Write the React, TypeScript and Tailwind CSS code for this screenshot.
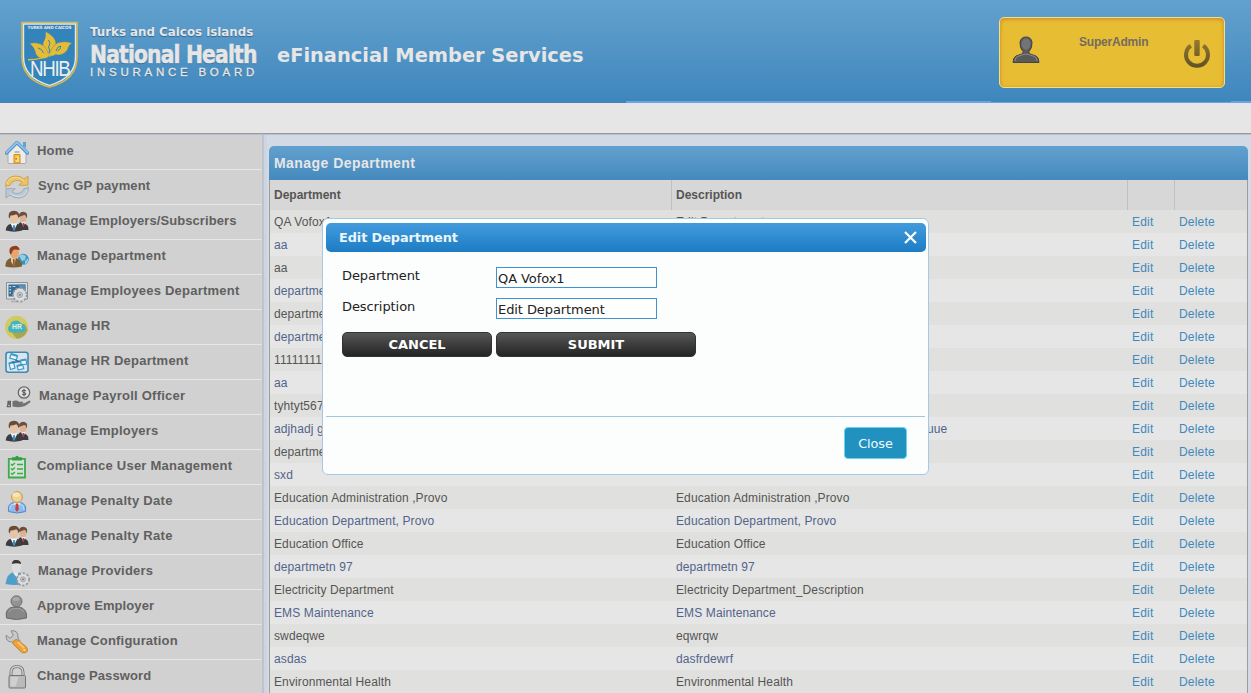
import React from "react";

const People = () => (
  <svg width="24" height="24" viewBox="0 0 24 24">
    <path d="M13 20q-1-8 4-8l5 3q2 2 1.500 5z" fill="#3b3c40" />
    <path d="M16 12h4l-1.500 5z" fill="#f2f2f2" />
    <path d="M17.600 13h1.200l.4 3-1 1.500-1-1.500z" fill="#b8323c" />
    <ellipse cx="18" cy="8" rx="3.400" ry="4.300" fill="#deb291" />
    <path d="M14 7q-.5-5 4-5.200 5 .2 4 5.700l-.7.8q0-3-2-3.200-3 1-5.300 1.900z" fill="#6b4f40" />
    <path d="M.7 20.500Q1 15 5.500 14h7q4.500 1.500 4.800 6.500-8 2.300-16.600 0z" fill="#3b3d42" />
    <path d="M5.500 13.500h7L9 20.500z" fill="#f4f4f4" />
    <path d="M8.300 15h1.500l.6 4-1.300 2.200L7.800 19z" fill="#3d8fc4" />
    <ellipse cx="8.800" cy="8" rx="4.300" ry="5.200" fill="#e6c3a4" />
    <path d="M3.700 7Q3 .9 9 .8q6 .3 5 6.200l-.8 1.300q0-3.300-2-4-3.300 1.500-5.700 1.300L4.700 8.500z" fill="#6a4a38" />
  </svg>
);

const Gear = ({ x, y, r }: { x: number; y: number; r: number }) => (
  <g transform={`translate(${x} ${y})`}>
    <circle r={r} fill="#d9dadc" stroke="#96999d" strokeWidth="2" strokeDasharray="2.200 1.700" />
    <circle r={r - 0.8} fill="#dcdddf" />
    <circle r={r * 0.42} fill="#c0c4c8" stroke="#999" strokeWidth=".7" />
    <circle r=".9" fill="#777" />
  </g>
);

const Home = () => (
  <svg width="24" height="24" viewBox="0 0 24 24">
    <path d="M3 12 12 4l9 8v10.500q0 1-1 1H4q-1 0-1-1z" fill="#ececea" stroke="#a9a9a9" />
    <path d="M18 2h3v6l-3-2z" fill="#62a3d6" />
    <path d="M1.500 13 12 2.500 22.500 13" fill="none" stroke="#4b8fc4" strokeWidth="3.400" strokeLinecap="round" strokeLinejoin="round" />
    <path d="M1.500 12.700 12 2.300 22.500 12.700" fill="none" stroke="#8fc4ec" strokeWidth="1.800" strokeLinecap="round" />
    <path d="M9.500 11h5v2h-5z" fill="#b7bbbd" />
    <path d="M9 14.500h6V23H9z" fill="#f2c23c" stroke="#d98a22" />
    <path d="M11 16.500h3V22h-3z" fill="#f7dc70" />
    <path d="M10.500 18h1.500v1.500h-1.500z" fill="#b8732a" />
  </svg>
);

const Sync = () => (
  <svg width="24" height="24" viewBox="0 0 24 24">
    <path d="M.6 12Q.3 2 10 1q5.500-.4 9 3L23 1.200v9h-9l3-3Q14 4.800 10.500 5.600 6 6.600 5 10.500 2 9.800.6 12z" fill="#ecc366" stroke="#c79a3c" strokeWidth=".8" />
    <path d="M1.800 9q1.500-6 8-6.600 5.500-.2 9 3.100" fill="none" stroke="#f5dc9c" />
    <path d="M23.400 12q.3 10-9.400 11-5.500.4-9-3L1 23v-9.300h9.300l-3.200 3.200q3 2.300 6.400 1.500 4.500-1 5.500-4.900 3 .5 4.400-1.500z" fill="#bcc7d4" stroke="#94a2b3" strokeWidth=".8" />
    <path d="M22.200 15q-1.500 6-8 6.600-5.500.2-9-3.100" fill="none" stroke="#d7dfe8" />
  </svg>
);

const UserGlobe = () => (
  <svg width="24" height="24" viewBox="0 0 24 24">
    <circle cx="18.300" cy="14.300" r="5.500" fill="#3d8fc0" />
    <path d="M14 11q3-3 7 0l-1 4-3 1zM20 16l3-3q.5 5-3 6.500z" fill="#91cfe2" />
    <path d="M.3 21.500Q.5 14 6 13h5q6 2 6 8.500-9 2-16.700 0z" fill="#7b5f35" />
    <path d="m6 12 5 .5-2 9-3-5z" fill="#dccb9c" />
    <path d="m8 14 1.500.5 0 5-1.200 1.500z" fill="#933923" />
    <ellipse cx="9.600" cy="8" rx="4.500" ry="5.400" fill="#e7a572" />
    <path d="M4.700 8Q3.500 2 8 1.300 13-.5 14.800 5l-5-.5Q7 5 7 8l-1.300 1.500z" fill="#8f3f20" />
  </svg>
);

const MonitorGear = () => (
  <svg width="24" height="24" viewBox="0 0 24 24">
    <path d="M1.500 2.500h21v16.500h-21z" fill="#dedfe1" stroke="#8b9096" />
    <path d="M3.500 4.500h17v12h-17z" fill="#356c96" />
    <path d="M12 4.500h8.500v9z" fill="#5a8caf" />
    <path d="M4.500 6h1.500v1.500H4.500zM4.500 9h1.500v1.500H4.500zM4.500 12h1.500v1.500H4.500zM7.500 6h3v1h-3z" fill="#b8d3e4" />
    <path d="M6 20.500h8v2H6z" fill="#b3b5b8" />
    <Gear x={14.800} y={14.800} r={6.700} />
  </svg>
);

const Hr = () => (
  <svg width="24" height="24" viewBox="0 0 24 24">
    <circle cx="11.500" cy="12.300" r="11.500" fill="#d0ca60" />
    <path d="m19.500 9 3.300 6q-3 8-11 8.800L6.500 17z" fill="#a9a64f" />
    <path d="M6.500 17.500a3.800 3.800 0 0 1-1.300-7.200Q6 5.300 11 5.700q3-.7 5 2.800 4 0 4.500 4.300T17 17.500z" fill="#45b3bb" />
    <text x="11.900" y="14" textAnchor="middle" fill="#e5efed" fontFamily="Liberation Sans" fontSize="6.800" fontWeight="bold">HR</text>
  </svg>
);

const HrDept = () => (
  <svg width="24" height="24" viewBox="0 0 24 24">
    <rect x="1" y="2.300" width="22" height="20" rx="2.500" fill="#dbe5eb" stroke="#3d8ab5" strokeWidth="1.600" />
    <g fill="#eef6fa" stroke="#3b9bcc" strokeWidth="1.200">
      <path d="m6 4 6.500 2-1.200 4-6.500-2zM15.500 10.500l5.500-1 .7 4.500-5.500 1zM4 13.500l4.500-1.500 1.500 6-4.500 1.500zM12 16l5.500-1.500 1.200 4-5.500 1.500z" />
      <path d="m6 4 6.500 2M15.500 10.500l5.500-1M4 13.500l4.500-1.500M12 16l5.500-1.500" strokeWidth="2" />
    </g>
    <path d="m10 10 5 1.500M7 12.500l8-1" stroke="#2b6f9b" strokeWidth="1.300" />
  </svg>
);

const Payroll = () => (
  <svg width="26" height="24" viewBox="0 0 26 24">
    <circle cx="19" cy="7.500" r="5.700" fill="#e2e2e2" stroke="#68696b" strokeWidth="1.300" />
    <path d="M21 5.800q-4-1.500-4 .3 0 1.100 2 1.400t2 1.500q0 1.700-4 .3M19 3.900v7.500" fill="none" stroke="#555" strokeWidth="1" />
    <path d="M2.500 15.700h3.500v6.500H1.500q1-3 1-6.500z" fill="#646567" />
    <path d="M7.500 16.200q4-1.500 6.500.5h4q1 1.500-3 2 5 .2 9-3 2-.5 1.300 1.500L20 21q-5 2-12.500.5z" fill="#707173" />
    <circle cx="4" cy="20.500" r=".7" fill="#ddd" />
  </svg>
);

const Checklist = () => (
  <svg width="24" height="24" viewBox="0 0 24 24">
    <path d="M3.800 3.800h16.200v18.700H3.800z" fill="#d6e2d6" stroke="#3bab4c" strokeWidth="1.800" />
    <path d="M7 2.300h3Q12-1 14 2.300h3v3.300H7z" fill="#339e43" />
    <path d="m6 9 1.300 1.300L10 8m-4 5.500 1.300 1.300L10 12.500m-4 5.500 1.300 1.300L10 17M12 9.500h6M12 14h6M12 18.500h6" fill="none" stroke="#3bab4c" strokeWidth="1.400" />
  </svg>
);

const Penalty = () => (
  <svg width="24" height="24" viewBox="0 0 24 24">
    <path d="M3.500 21.500q-1-7.500 4.500-9h8q5.500 1.500 4.500 9-8 3-17 0z" fill="#8bbced" stroke="#5486c4" />
    <path d="M5 19q0-4.500 3-4.500h7q4 .5 4 5" stroke="#c2def8" fill="none" />
    <path d="M8 12.500h8l-3.500 4z" fill="#e9f1f8" />
    <path d="m10.800 13.500 2.500 0 .5 6-1.800 2.500-1.700-2.500z" fill="#ca3f3d" />
    <circle cx="12" cy="7" r="5.400" fill="#efd394" stroke="#c8964a" />
    <ellipse cx="11" cy="4.800" rx="3.600" ry="2.200" fill="#f7e6bd" />
  </svg>
);

const Provider = () => (
  <svg width="26" height="27" viewBox="0 0 26 27">
    <path d="M.5 24Q2 13 9 12h5q5 4 4 12-8 2-17.500 0z" fill="#4e9fc8" />
    <path d="m8.500 10 5 .5-1 8-4-5z" fill="#e9eaeb" />
    <ellipse cx="11.500" cy="7" rx="4.500" ry="6.300" fill="#dedede" />
    <path d="M7 4Q7-.3 11.500 0T16 4q-4.500-1.700-9 0z" fill="#3b3533" />
    <Gear x={18} y={19.300} r={6} />
  </svg>
);

const GrayUser = () => (
  <svg width="24" height="25" viewBox="0 0 24 25">
    <path d="M1.500 23q-2-10 7-11h6q8 2 7 11-10 3-20 0z" fill="#878787" stroke="#696969" />
    <path d="M4 17.500q1-4 5-4h5q4 1 5 4" fill="none" stroke="#a0a0a0" />
    <circle cx="11.500" cy="6.300" r="5.500" fill="#939393" stroke="#6d6d6d" />
    <ellipse cx="11" cy="4" rx="3.500" ry="2" fill="#a9a9a9" />
  </svg>
);

const Wrench = () => (
  <svg width="24" height="24" viewBox="0 0 24 24">
    <path d="M6 .8q7-1 7 6-.3 2.500 2 4l-4 4Q9 12 6.500 12 .5 11.500 1.200 5.200L5 8.300 8.300 5.500z" fill="#c6c8ca" stroke="#888c90" />
    <path d="m12 9.500 9 7q3.500 5-1 6.300-3 .8-5-2L8 14q-1-4 4-4.500z" fill="#eca239" stroke="#c17923" strokeWidth=".8" />
    <path d="m12.500 12 6.500 6" stroke="#f7c56d" strokeWidth="2" />
    <circle cx="19.300" cy="20" r="1" fill="#fce2ae" />
  </svg>
);

const Lock = () => (
  <svg width="24" height="24" viewBox="0 0 24 24">
    <path d="M6 11V7.500Q6 1.500 12 1.500t6 6V11" fill="none" stroke="#747474" strokeWidth="3" />
    <path d="M6 11V7.500Q6 1.500 12 1.500t6 6V11" fill="none" stroke="#d3d3d3" strokeWidth="1.300" />
    <rect x="4" y="10.500" width="16.500" height="12.500" rx="1" fill="#bababa" stroke="#757575" />
    <path d="M5.500 12h8l-3 9.500h-5z" fill="#d0d0d0" />
  </svg>
);

const menu: [string, () => React.JSX.Element, string][] = [
  ["Home", Home, "pl-[8px] tracking-[0.2px]"],
  ["Sync GP payment", Sync, "pl-[9px] tracking-[0.13px]"],
  ["Manage Employers/Subscribers", People, "pl-[8px] tracking-[0.08px]"],
  ["Manage Department", UserGlobe, "pl-[8px] tracking-[0.28px]"],
  ["Manage Employees Department", MonitorGear, "pl-[8px] tracking-[0.22px]"],
  ["Manage HR", Hr, "pl-[8px] tracking-[0.3px]"],
  ["Manage HR Department", HrDept, "pl-[8px] tracking-[0.25px]"],
  ["Manage Payroll Officer", Payroll, "pl-[8px] tracking-[0.25px]"],
  ["Manage Employers", People, "pl-[8px] tracking-[0.18px]"],
  ["Compliance User Management", Checklist, "pl-[8px] tracking-[0.23px]"],
  ["Manage Penalty Date", Penalty, "pl-[8px] tracking-[0.3px]"],
  ["Manage Penalty Rate", People, "pl-[8px] tracking-[0.3px]"],
  ["Manage Providers", Provider, "pl-[7px] tracking-[0.2px]"],
  ["Approve Employer", GrayUser, "pl-[8px] tracking-[0.1px]"],
  ["Manage Configuration", Wrench, "pl-[8px] tracking-[0.18px]"],
  ["Change Password", Lock, "pl-[8px] tracking-[0.1px]"],
];

const rows: [string, string][] = [
  ["QA Vofox1", "Edit Department"],
  ["aa", "aa"],
  ["aa", "aa"],
  ["departmetn", "departmetn"],
  ["departmetn", "departmetn"],
  ["departmetn", "departmetn"],
  ["11111111", "11111111"],
  ["aa", "aa"],
  ["tyhtyt567", "tyhtyt567"],
  ["adjhadj g", "uuuuuuuuuuuuuuuuuuuuuuuuuuuuuuuuuuuuuuue"],
  ["departmetn", "departmetn"],
  ["sxd", ""],
  ["Education Administration ,Provo", "Education Administration ,Provo"],
  ["Education Department, Provo", "Education Department, Provo"],
  ["Education Office", "Education Office"],
  ["departmetn 97", "departmetn 97"],
  ["Electricity Department", "Electricity Department_Description"],
  ["EMS Maintenance", "EMS Maintenance"],
  ["swdeqwe", "eqwrqw"],
  ["asdas", "dasfrdewrf"],
  ["Environmental Health", "Environmental Health"],
];

const Shield = () => (
  <svg width="60" height="70" viewBox="0 0 60 70" className="shrink-0">
    <path d="M2 2.500h55V37q0 23-27.500 30Q2 60 2 37z" fill="#3384ba" stroke="#d9b94a" strokeWidth="1.600" />
    <path d="M3.500 4h52v33q0 21-26 28.300Q3.500 58 3.500 37z" fill="none" stroke="#e2e8ea" strokeWidth="1.400" />
    <text x="29.500" y="8.800" textAnchor="middle" textLength="44" fontFamily="DejaVu Sans" fontWeight="bold" fontSize="4.300" fill="#e6e6e6">TURKS AND CAICOS</text>
    <g fill="#e6bc35" stroke="#3384ba" strokeWidth=".4">
      <path d="M25.500 11.500q10 5 10.500 12-.5 7-6.500 14-7-8-6.500-14.500 3.500-5.500 2.500-11.500z" />
      <path d="M9.500 23.500q5.500-1.500 11 .5 6 2 8.500 12-2 3-7 2.500-6-1-7-7.500-1-4-5.500-7.500z" />
      <path d="M52 23q-8-2.500-14.500 0-6 3-8.500 13 3 1 7-1.500 4 1.500 8.500-1.500 3.500-2.500 4-6 1-2.500 3.500-4z" />
    </g>
    <path d="M28.500 20q3 3 0 7 2 3 .5 6M18 28q4 .5 5.500 5M36 31q1-4.500 4.500-5 1 3-3 5" fill="none" stroke="#3384ba" strokeWidth="1" />
    <path d="M8 39.700q15 0 23-6" fill="none" stroke="#e6bc35" strokeWidth="1.400" />
    <text x="10" y="55.700" textLength="39.500" lengthAdjust="spacingAndGlyphs" fontFamily="Liberation Sans" fontSize="21.500" letterSpacing="-1.500" fill="#eceeee">NHIB</text>
  </svg>
);

const Header = () => (
  <header className="flex h-[103px] bg-[linear-gradient(#62a1cf,#5194c5_50%,#3d86bc)]">
    <div className="flex w-[626px] pt-[20px] pl-[20px]">
      <Shield />
      <div className="w-[197px] shrink-0 pt-[4px] pl-[10px] font-['DejaVu_Sans'] font-bold whitespace-nowrap text-[#e6e6e6] [text-shadow:0_1px_1px_#35658a]">
        <div className="h-[16px] text-[11.850px] leading-[17px]">Turks and Caicos islands</div>
        <div className="h-[26px] w-[168px] pt-[4px]">
          <div className="h-[22px] origin-left scale-x-[.828] text-[24.500px] leading-[22px] tracking-[-1px] [-webkit-text-stroke:0.600px_#e6e6e6]">National Health</div>
        </div>
        <div className="pt-px font-['Liberation_Sans'] text-[11.500px] leading-[10px] font-normal tracking-[3.750px] [-webkit-text-stroke:0.300px_#e6e6e6]">INSURANCE BOARD</div>
      </div>
      <div className="pt-[21px] font-['DejaVu_Sans'] text-[19.400px] leading-[30px] font-bold whitespace-nowrap text-[#e6e6e6]">
        eFinancial Member Services
      </div>
    </div>
    <div className="h-full w-[365px] border-b-2 border-[#6aa5e2]" />
    <div className="h-full w-[240px] border-b border-[#6aa5e2] pt-[17px] pl-[8px]">
      <div className="flex h-[71px] w-[226px] rounded-[5px] border border-[#efe08a] bg-[#e7be33] shadow-[inset_0_1px_4px_#cf7f28]">
        <svg className="mt-[18px] ml-[12px]" width="28" height="29" viewBox="0 0 28 29">
          <path d="M1 26.500q0-5 3-6.500l7-2.500v-2Q7.500 12 8 6q1-5 6-5t6 5q.5 6-3 9.500v2l7 2.500q3 1.500 3 6.500z" fill="#5b5a5a" stroke="#454547" strokeWidth="1" />
          <path d="M3 25q0-4 3-4.700l6-2h4l6 2q3 .7 3 4.700" fill="none" stroke="#8a8a8c" />
          <ellipse cx="14" cy="8" rx="4.500" ry="5.800" fill="#747477" />
        </svg>
        <div className="flex-1 pt-[16px] pl-[39px] text-[12px] leading-[16px] font-bold tracking-[-0.2px] text-[#746b61]">SuperAdmin</div>
        <svg className="mt-[21px] mr-[13px]" width="28" height="30" viewBox="0 0 28 30">
          <defs>
            <linearGradient id="power" gradientUnits="userSpaceOnUse" x1="0" y1="2" x2="0" y2="28">
              <stop offset="0" stopColor="#94772f" />
              <stop offset="1" stopColor="#605227" />
            </linearGradient>
          </defs>
          <path d="M7.800 6.700a11 11 0 1 0 12.400 0" fill="none" stroke="url(#power)" strokeWidth="4" />
          <rect x="11.300" y="1" width="5.400" height="16" rx="1" fill="url(#power)" />
        </svg>
      </div>
    </div>
    <div className="h-full w-[20px] border-b-2 border-[#6aa5e2]" />
  </header>
);

const Modal = () => (
  <div className="absolute top-[218px] left-[322px] h-[257px] w-[607px] rounded-[6px] border border-[#a5c9e4] bg-[#fcfefe] px-[3px] pt-[4px] font-['DejaVu_Sans'] text-[13px] tracking-[-0.08px] text-[#222]">
    <div className="flex h-[29px] w-[600px] items-center justify-between rounded-[5px] bg-[linear-gradient(#439bdd,#1c7cc4)] pr-[9px] pl-[13px] text-[12.850px] font-bold text-[#eaf5f7]">
      <span>Edit Department</span>
      <svg width="13" height="13" viewBox="0 0 13 13">
        <path d="m1 1 11 11m0-11-11 11" stroke="#fff" strokeWidth="2.200" />
      </svg>
    </div>
    <div className="h-[165px] border-b border-[#a0c6e2] pt-[15px] pl-[16px]">
      <div className="flex h-[31px]">
        <label className="w-[154px] leading-[18px]">Department</label>
        <div className="h-[21px] w-[161px] border border-[#3c94d4] bg-white pl-px leading-[22px]">QA Vofox1</div>
      </div>
      <div className="flex h-[34px]">
        <label className="w-[154px] leading-[18px]">Description</label>
        <div className="h-[21px] w-[161px] border border-[#3c94d4] bg-white pl-px leading-[22px]">Edit Department</div>
      </div>
      <div className="flex gap-[4px] text-[13px] leading-[23px] font-bold tracking-normal text-white">
        <button className="h-[25px] w-[150px] rounded-[5px] border border-[#333] bg-[linear-gradient(#565656,#242424)]">CANCEL</button>
        <button className="h-[25px] w-[200px] rounded-[5px] border border-[#333] bg-[linear-gradient(#565656,#242424)]">SUBMIT</button>
      </div>
    </div>
    <div className="flex justify-end pt-[10px] pr-[18px]">
      <button className="h-[32px] w-[63px] rounded-[4px] border border-[#69d1f2] bg-[#2191c0] pt-px text-[12.800px] text-[#f2fbfd]">Close</button>
    </div>
  </div>
);

export default function App() {
  return (
    <div className="relative flex h-[693px] w-[1251px] flex-col overflow-hidden bg-[#d4dae5] font-['Liberation_Sans',Arial,sans-serif]">
      <Header />
      <div className="h-[32px] shrink-0 border-b border-[#b8bfcc] bg-[#e6e6e6]">
        <div className="h-[31px] border-b border-[#999ba0]" />
      </div>
      <div className="flex min-h-0 flex-1">
        <nav className="w-[267px] shrink-0 border-r-[3px] border-[#cdd5e1] bg-[#bcc4d0]">
          <div className="w-[262px]">
            {menu.map(([label, Icon, spacing]) => (
              <div key={label} className="flex h-[35px] border-b border-[#e6e6e6] bg-[#d1d1d1] pl-[5px]">
                <div className="pt-[5px]"><Icon /></div>
                <span className={`${spacing} pt-[7px] text-[13px] leading-[17px] font-bold whitespace-nowrap text-[#606060]`}>{label}</span>
              </div>
            ))}
          </div>
        </nav>
        <main className="pt-[11px] pl-[2px]">
          <div className="h-[34px] w-[979px] rounded-t-[5px] bg-[linear-gradient(#62a1cf,#4589bd)] pl-[5px] text-[14px] leading-[35px] font-bold tracking-[0.450px] text-[#e6e6e6]">Manage Department</div>
          <div className="w-[979px] border-x border-[#9d9d9d] text-[12px]">
            <div className="grid h-[30px] grid-cols-[402px_456px_47px_72px] bg-[#d7d7d7] leading-[30px] font-bold text-[#555]">
              <div className="border-r border-[#c0c0c0] pl-[4px]">Department</div>
              <div className="border-r border-[#c0c0c0] pl-[4px]">Description</div>
              <div className="border-r border-[#c0c0c0]" />
              <div />
            </div>
            {rows.map(([name, desc], i) => (
              <div key={i} className={`grid h-[23px] grid-cols-[402px_456px_47px_72px] leading-[24px] tracking-[0.110px] whitespace-nowrap ${i % 2 ? "bg-[#e6e6e6] text-[#52648a]" : "bg-[#e0e0de] text-[#555]"}`}>
                <div className="pl-[4px]">{name}</div>
                <div className="pl-[4px]">{desc}</div>
                <a className="pl-[4px] tracking-[0.200px] text-[#4088bd]">Edit</a>
                <a className="pl-[4px] tracking-[0.200px] text-[#4088bd]">Delete</a>
              </div>
            ))}
          </div>
        </main>
      </div>
      <Modal />
    </div>
  );
}
